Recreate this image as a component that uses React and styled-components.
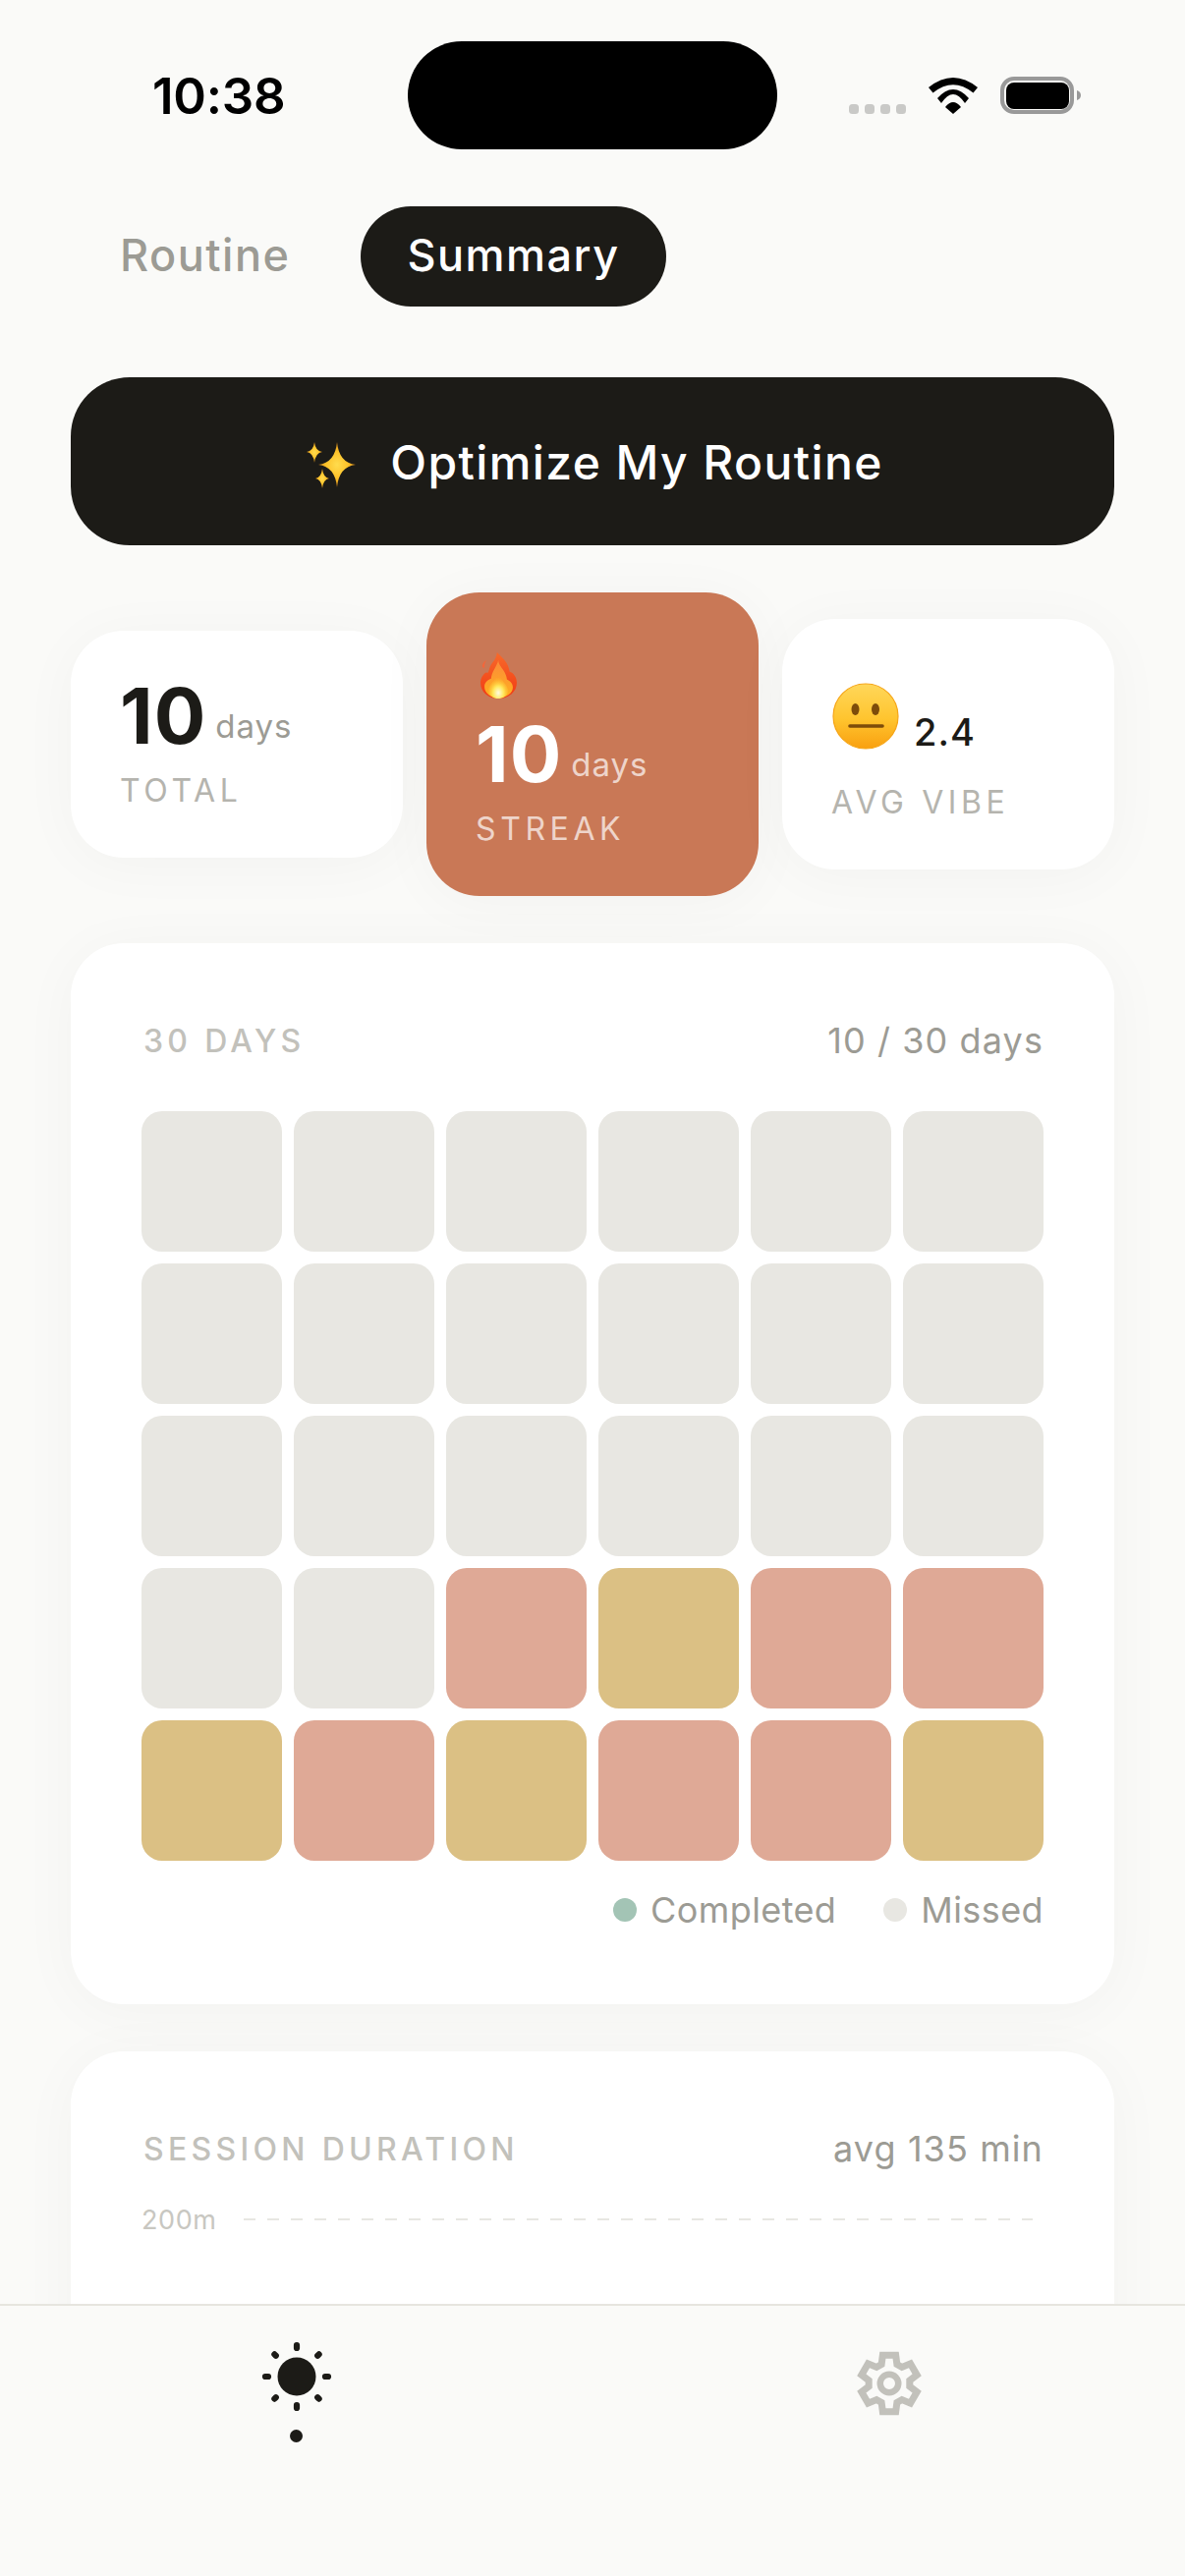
import React from "react";
import styled, { createGlobalStyle } from "styled-components";

const GlobalStyle = createGlobalStyle`
  html, body { margin: 0; padding: 0; background: #fafaf8; }
  * { box-sizing: border-box; }
  body { font-family: Inter, "Noto Sans", sans-serif; }
`;

const Screen = styled.div`
  width: 1206px;
  height: 2622px;
  display: flex;
  flex-direction: column;
  background: #fafaf8;
  overflow: hidden;
`;

const Scroller = styled.main`
  flex: 1;
  min-height: 0;
  overflow: hidden;
`;

/* ---------- status bar ---------- */
const StatusBar = styled.header`
  height: 210px;
  padding-top: 42px;
  display: grid;
  grid-template-columns: 1fr 376px 1fr;
  align-items: start;
`;

const Clock = styled.div`
  height: 110px;
  padding-left: 155px;
  display: flex;
  align-items: center;
  font-size: 51px;
  font-weight: 600;
  letter-spacing: -0.2px;
  color: #000;
`;

const Island = styled.div`
  height: 110px;
  border-radius: 55px;
  background: #000;
`;

const StatusIcons = styled.div`
  height: 74px;
  padding-right: 106px;
  display: flex;
  justify-content: flex-end;
  align-items: flex-end;
  gap: 22px;
`;

const SignalDots = styled.div`
  display: flex;
  gap: 6px;
`;

const SignalDot = styled.span`
  width: 10px;
  height: 10px;
  border-radius: 3.5px;
  background: #c9c9c7;
`;

/* ---------- tabs ---------- */
const Tabs = styled.nav`
  display: flex;
  gap: 25px;
  padding: 0 75px;
`;

const Tab = styled.div`
  height: 102px;
  padding: 0 47px 3px;
  display: flex;
  align-items: center;
  border-radius: 51px;
  font-size: 45px;
  font-weight: 500;
  letter-spacing: 1.5px;
  color: ${(p) => (p.$active ? "#fff" : "#9c9b94")};
  background: ${(p) => (p.$active ? "#1c1b17" : "transparent")};
`;

/* ---------- call to action ---------- */
const OptimizeButton = styled.div`
  height: 171px;
  margin: 72px 72px 0;
  padding: 2px 0 0 5px;
  display: flex;
  align-items: center;
  justify-content: center;
  gap: 35px;
  border-radius: 60px;
  background: #1c1b17;
  color: #fff;
  font-size: 48px;
  font-weight: 500;
  letter-spacing: 1.4px;
`;

/* ---------- stats ---------- */
const Stats = styled.section`
  margin: 48px 72px 0;
  display: grid;
  grid-template-columns: repeat(3, 1fr);
  gap: 24px;
  align-items: center;
`;

const StatCard = styled.div`
  padding: 48px 50px;
  border-radius: 54px;
  background: ${(p) => (p.$accent ? "#c97856" : "#fff")};
  box-shadow: 0 6px 60px rgba(40, 38, 30, 0.035);
`;

const EmojiSlot = styled.div`
  height: 78px;
  padding-top: 13px;
  margin-left: 5px;
  display: flex;
  align-items: flex-start;
`;

const ValueRow = styled.div`
  height: ${(p) => (p.$tall ? "105px" : "81px")};
  padding-bottom: 4px;
  display: flex;
  align-items: center;
  gap: ${(p) => (p.$tall ? "12px" : "9px")};
`;

const BigNumber = styled.span`
  font-size: 78px;
  line-height: 77px;
  font-weight: 700;
  letter-spacing: 1px;
  color: ${(p) => (p.$accent ? "#fff" : "#1c1b17")};
`;

const Unit = styled.span`
  margin-top: 20px;
  font-size: 33px;
  letter-spacing: 1px;
  color: ${(p) => (p.$accent ? "rgba(255,255,255,0.7)" : "#9c9b94")};
`;

const VibeScore = styled.span`
  padding-top: 32px;
  margin-left: 2px;
  font-size: 38px;
  font-weight: 500;
  letter-spacing: 1px;
  color: #1c1b17;
`;

const StatLabel = styled.div`
  margin-top: 16px;
  margin-bottom: 2px;
  font-size: 32px;
  line-height: 36px;
  letter-spacing: 4.6px;
  color: ${(p) => (p.$accent ? "rgba(255,255,255,0.7)" : "#b5b4ae")};
`;

/* ---------- panels ---------- */
const Panel = styled.section`
  margin: 48px 72px 0;
  padding: 72px 72px 69px;
  border-radius: 54px;
  background: #fff;
  box-shadow: 0 6px 60px rgba(40, 38, 30, 0.035);
`;

const PanelHeader = styled.div`
  height: 54px;
  display: flex;
  align-items: center;
  justify-content: space-between;
`;

const PanelTitle = styled.div`
  margin-left: 2px;
  font-size: 32px;
  font-weight: 500;
  letter-spacing: 4.3px;
  color: #c2c1bb;
`;

const PanelMeta = styled.div`
  font-size: 36px;
  letter-spacing: 1.1px;
  color: #9c9b94;
`;

const DayGrid = styled.div`
  margin-top: 45px;
  display: grid;
  grid-template-columns: repeat(6, 143px);
  grid-auto-rows: 143px;
  gap: 12px;
`;

const cellColors = { empty: "#e8e7e2", rose: "#dfa996", gold: "#dbc084" };

const DayCell = styled.div`
  border-radius: 21px;
  background: ${(p) => cellColors[p.$tone]};
`;

const Legend = styled.div`
  height: 54px;
  margin-top: 23px;
  display: flex;
  align-items: center;
  justify-content: flex-end;
  gap: 48px;
`;

const LegendItem = styled.div`
  display: flex;
  align-items: center;
  gap: 14px;
  font-size: 36px;
  letter-spacing: 0.4px;
  color: #9c9b94;
`;

const LegendDot = styled.span`
  width: 24px;
  height: 24px;
  border-radius: 50%;
  background: ${(p) => p.$color};
`;

/* The chart continues below the fold, behind the navigation bar. */
const ChartArea = styled.div`
  height: 400px;
  margin-top: 27px;
`;

const ChartRow = styled.div`
  height: 36px;
  display: flex;
  align-items: center;
  gap: 27px;
`;

const AxisLabel = styled.span`
  font-size: 27px;
  letter-spacing: 0.6px;
  color: #c8c7c1;
`;

const DashLine = styled.div`
  flex: 1;
  height: 2px;
  margin-right: 11px;
  background: repeating-linear-gradient(90deg, #e8e7e2 0 12px, transparent 12px 24px);
`;

/* ---------- bottom navigation ---------- */
const BottomNav = styled.footer`
  flex: none;
  height: 277px;
  display: flex;
  background: #fafaf8;
  border-top: 2px solid #e6e5df;
`;

const NavItem = styled.div`
  flex: 1;
  display: flex;
  flex-direction: column;
  align-items: center;
  padding-top: ${(p) => p.$top}px;
`;

const ActiveDot = styled.span`
  width: 13px;
  height: 13px;
  margin-top: 18px;
  border-radius: 50%;
  background: #1c1b17;
`;

const SparkleSvg = styled.svg`
  margin-top: 6px;
`;

/* ---------- drawn icons ---------- */
const WifiIcon = () => (
  <svg width="52" height="38" viewBox="0 0 52 38" fill="#000">
    <path d="M1 11Q26-9 51 11L46.5 16.5Q26 0 5.5 16.5Z" />
    <path d="M10 22Q26 4 42 22L38 27Q26 9 14 27Z" />
    <path d="M18 31Q26 21 34 31L26 38Z" />
  </svg>
);

const BatteryIcon = () => (
  <svg width="82" height="38" viewBox="0 0 82 38">
    <rect x="2" y="2" width="71" height="34" rx="12" fill="none" stroke="#999" strokeWidth="4" />
    <rect x="6" y="6" width="64" height="27" rx="8" fill="#000" />
    <path d="M78 14c2.4.6 4 2.6 4 5s-1.600 4.400-4 5z" fill="#999" />
  </svg>
);

const SparklesIcon = () => (
  <SparkleSvg width="50" height="48" viewBox="0 0 50 48">
    <defs>
      <radialGradient id="spark" cx="50%" cy="50%" r="50%">
        <stop offset="0%" stopColor="#ffdc4e" />
        <stop offset="60%" stopColor="#fdc128" />
        <stop offset="100%" stopColor="#d98a1a" />
      </radialGradient>
    </defs>
    <path d="M31 0Q33 21 50 23Q33 25 31 46Q29 25 12 23Q29 21 31 0Z" fill="url(#spark)" />
    <path d="M8 0Q9 9 16 10Q9 11 8 21Q7 11 0 10Q7 9 8 0Z" fill="url(#spark)" />
    <path d="M16 27Q17 36 23 37Q17 38 16 47Q15 38 9 37Q15 36 16 27Z" fill="url(#spark)" />
  </SparkleSvg>
);

const FlameIcon = () => (
  <svg width="37" height="47" viewBox="0 0 110 140">
    <defs>
      <linearGradient id="flameOuter" x1="0" y1="0" x2="0" y2="1">
        <stop offset="0%" stopColor="#f86a2a" />
        <stop offset="100%" stopColor="#f03a14" />
      </linearGradient>
      <linearGradient id="flameMiddle" x1="0" y1="0" x2="0" y2="1">
        <stop offset="0%" stopColor="#fb8a3a" />
        <stop offset="100%" stopColor="#ffb01e" />
      </linearGradient>
      <radialGradient id="flameCore" cx="50%" cy="78%" r="60%">
        <stop offset="0%" stopColor="#fffbe0" />
        <stop offset="45%" stopColor="#ffe75a" />
        <stop offset="100%" stopColor="#ffbe26" stopOpacity="0" />
      </radialGradient>
    </defs>
    <path
      d="M50 0C62 14 84 28 88 58C100 62 110 76 110 92C110 120 84 140 55 140C24 140 0 120 0 92C0 78 8 66 18 60C22 66 24 60 28 46C32 32 48 24 50 0Z"
      fill="url(#flameOuter)"
    />
    <path d="M6 45C4 38 8 30 18 24C12 32 12 38 12 48Z" fill="#f4663a" />
    <path
      d="M54 24C54 42 78 56 80 82C90 88 98 94 98 106C98 124 78 138 55 138C32 138 12 124 12 104C12 92 22 84 32 80C34 58 48 46 54 24Z"
      fill="url(#flameMiddle)"
    />
    <path
      d="M54 62C58 82 84 100 84 116C84 130 70 140 54 140C38 140 24 130 24 116C24 96 48 84 54 62Z"
      fill="url(#flameCore)"
    />
  </svg>
);

const NeutralFace = () => (
  <svg width="70" height="70" viewBox="0 0 70 70">
    <defs>
      <linearGradient id="faceFill" x1="0" y1="0" x2="0" y2="1">
        <stop offset="0%" stopColor="#ffd75a" />
        <stop offset="55%" stopColor="#ffc42e" />
        <stop offset="100%" stopColor="#f9a010" />
      </linearGradient>
    </defs>
    <circle cx="35" cy="35" r="33" fill="url(#faceFill)" stroke="#f6a516" strokeWidth="1.200" />
    <ellipse cx="24.500" cy="28" rx="4" ry="6" fill="#7d4c0a" />
    <ellipse cx="45" cy="28" rx="4" ry="6" fill="#7d4c0a" />
    <path d="M19 45H52" stroke="#7d4c0a" strokeWidth="3.600" strokeLinecap="round" />
  </svg>
);

const SunIcon = () => {
  const c = 36;
  const ray = (deg, from, to) => {
    const r = (deg * Math.PI) / 180;
    return [c + from * Math.cos(r), c + from * Math.sin(r), c + to * Math.cos(r), c + to * Math.sin(r)];
  };
  const rays = [
    ...[0, 90, 180, 270].map((a) => ray(a, 29, 32)),
    ...[45, 135, 225, 315].map((a) => ray(a, 30, 32)),
  ];
  return (
    <svg width="72" height="72" viewBox="0 0 72 72" stroke="#1c1b17" strokeWidth="6.200" strokeLinecap="round">
      <circle cx={c} cy={c} r="19.500" fill="#1c1b17" stroke="none" />
      {rays.map(([x1, y1, x2, y2]) => (
        <line key={`${x1}-${y1}`} x1={x1} y1={y1} x2={x2} y2={y2} />
      ))}
    </svg>
  );
};

const gearOutline = () => {
  const pts = [];
  for (let i = 0; i < 6; i += 1) {
    const a = -90 + i * 60;
    [[-22, 21], [-13, 29.5], [13, 29.5], [22, 21]].forEach(([off, rad]) => {
      const t = ((a + off) * Math.PI) / 180;
      pts.push(`${(33 + rad * Math.cos(t)).toFixed(2)},${(33 + rad * Math.sin(t)).toFixed(2)}`);
    });
  }
  return pts.join(" ");
};

const GearIcon = () => (
  <svg width="66" height="66" viewBox="0 0 66 66" fill="none" stroke="#c2c1bb">
    <polygon points={gearOutline()} strokeWidth="7" strokeLinejoin="miter" strokeMiterlimit="2" />
    <circle cx="33" cy="33" r="9.250" strokeWidth="6.500" />
  </svg>
);

const tones = [
  ...Array(20).fill("empty"),
  "rose", "gold", "rose", "rose",
  "gold", "rose", "gold", "rose", "rose", "gold",
];

export default function App() {
  return (
    <>
      <GlobalStyle />
      <Screen>
        <Scroller>
          <StatusBar>
            <Clock>10:38</Clock>
            <Island />
            <StatusIcons>
              <SignalDots>
                {[0, 1, 2, 3].map((i) => (
                  <SignalDot key={i} />
                ))}
              </SignalDots>
              <WifiIcon />
              <BatteryIcon />
            </StatusIcons>
          </StatusBar>

          <Tabs>
            <Tab>Routine</Tab>
            <Tab $active>Summary</Tab>
          </Tabs>

          <OptimizeButton>
            <SparklesIcon />
            <span>Optimize My Routine</span>
          </OptimizeButton>

          <Stats>
            <StatCard>
              <ValueRow>
                <BigNumber>10</BigNumber>
                <Unit>days</Unit>
              </ValueRow>
              <StatLabel>TOTAL</StatLabel>
            </StatCard>
            <StatCard $accent>
              <EmojiSlot>
                <FlameIcon />
              </EmojiSlot>
              <ValueRow>
                <BigNumber $accent>10</BigNumber>
                <Unit $accent>days</Unit>
              </ValueRow>
              <StatLabel $accent>STREAK</StatLabel>
            </StatCard>
            <StatCard>
              <ValueRow $tall>
                <NeutralFace />
                <VibeScore>2.4</VibeScore>
              </ValueRow>
              <StatLabel>AVG VIBE</StatLabel>
            </StatCard>
          </Stats>

          <Panel>
            <PanelHeader>
              <PanelTitle>30 DAYS</PanelTitle>
              <PanelMeta>10 / 30 days</PanelMeta>
            </PanelHeader>
            <DayGrid>
              {tones.map((tone, i) => (
                <DayCell key={i} $tone={tone} />
              ))}
            </DayGrid>
            <Legend>
              <LegendItem>
                <LegendDot $color="#a3c4b5" />
                Completed
              </LegendItem>
              <LegendItem>
                <LegendDot $color="#e8e7e2" />
                Missed
              </LegendItem>
            </Legend>
          </Panel>

          <Panel>
            <PanelHeader>
              <PanelTitle>SESSION DURATION</PanelTitle>
              <PanelMeta>avg 135 min</PanelMeta>
            </PanelHeader>
            <ChartArea>
              <ChartRow>
                <AxisLabel>200m</AxisLabel>
                <DashLine />
              </ChartRow>
            </ChartArea>
          </Panel>
        </Scroller>

        <BottomNav>
          <NavItem $top={36}>
            <SunIcon />
            <ActiveDot />
          </NavItem>
          <NavItem $top={46}>
            <GearIcon />
          </NavItem>
        </BottomNav>
      </Screen>
    </>
  );
}
